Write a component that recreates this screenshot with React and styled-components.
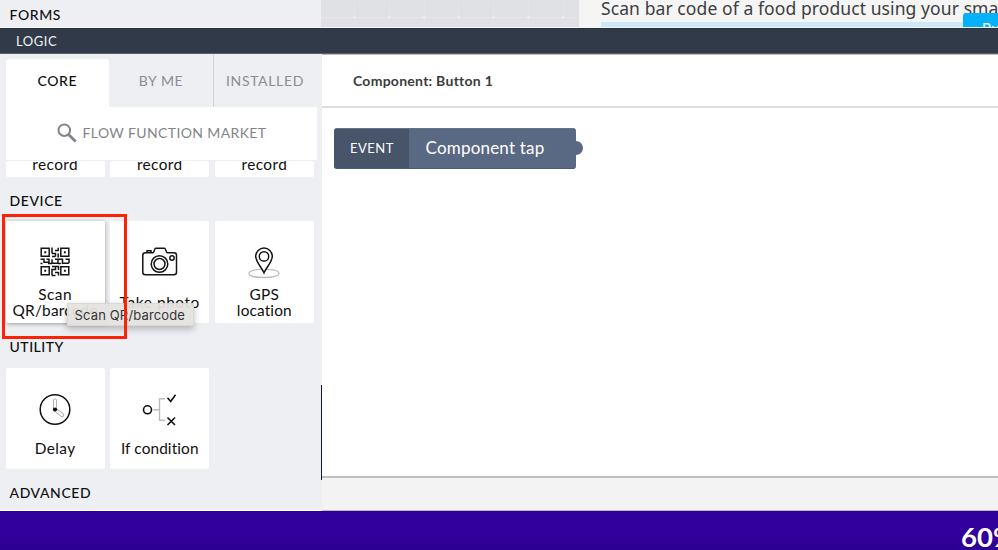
import React from "react";
import styled, { createGlobalStyle } from "styled-components";

const Global = createGlobalStyle`
  * { box-sizing: border-box; }
  body { margin: 0; overflow: hidden; background: #edeff3; }
`;

const Page = styled.div`
  width: 998px;
  height: 550px;
  overflow: hidden;
  display: flex;
  flex-direction: column;
  font-family: Lato, "Open Sans", sans-serif;
  color: #101010;
`;

/* A single line of text with tunable tracking */
const Text = styled.span`
  display: block;
  white-space: nowrap;
  font-size: ${(p) => p.$size || 15.4}px;
  line-height: ${(p) => p.$line || 16}px;
  font-weight: ${(p) => p.$weight || 400};
  letter-spacing: ${(p) => p.$track || 0}px;
  color: ${(p) => p.$color || "inherit"};
`;

const TopStrip = styled.div`
  height: 28px;
  flex: none;
  display: flex;
  overflow: hidden;
  border-bottom: 1px solid #f7f8fa;
`;
const TopSide = styled.div`
  width: 321px;
  padding: 7px 0 0 9.5px;
  background: #edeff3;
`;
const GridCanvas = styled.div`
  width: 258px;
  background:
    radial-gradient(circle at 50% 50%, #ebecee 0 1px, transparent 2px) 16px 0 / 34.8px 34px,
    repeating-linear-gradient(90deg, transparent 0 33px, #e3e4e7 33px 34px, transparent 34px 34.8px),
    linear-gradient(transparent 17px, #e5e6e9 17px 18px, transparent 18px),
    #e0e1e5;
`;
const Preview = styled.div`
  position: relative;
  flex: 1;
  padding-left: 22px;
  background: #f5f5f5;
  overflow: hidden;
  font-family: "Noto Sans", sans-serif;
`;
const Selection = styled.div`
  height: 6px;
  margin-top: 6px;
  background: #cde8f8;
`;
const BlueTag = styled.div`
  position: absolute;
  left: 384px;
  top: 13px;
  width: 60px;
  height: 24px;
  padding: 8px 0 0 19px;
  border-radius: 3px;
  background: #06b1fb;
  font-family: Lato, sans-serif;
`;

const LogicBar = styled.div`
  height: 26px;
  flex: none;
  padding: 4px 0 0 16px;
  background: #303a49;
  border-top: 1px solid #29323f;
  border-bottom: 1px solid #59616c;
`;

const Body = styled.div`
  height: 457px;
  flex: none;
  display: flex;
`;
const Sidebar = styled.aside`
  position: relative;
  width: 322px;
  padding: 5px 5px 0 5.5px;
  background: #edeff3;
  border-bottom: 1px solid #fff;
`;
const Tabs = styled.div`
  display: flex;
  height: 48px;
`;
const Tab = styled.div`
  width: ${(p) => p.$w}px;
  padding-top: 14px;
  display: flex;
  justify-content: center;
  background: ${(p) => (p.$active ? "#fff" : "transparent")};
  border-radius: 3px 3px 0 0;
`;
const TabRule = styled.div`
  width: 1px;
  height: 53px;
  margin-top: -5px;
  background: #cfd1d6;
`;
const Market = styled.div`
  display: flex;
  width: 311.5px;
  height: 54px;
  padding: 16px 0 0 51px;
  gap: 6px;
  background: #fff;
  border-bottom: 1px solid #eeeff2;
`;
const Cards = styled.div`
  display: flex;
  gap: 5.3px;
  height: ${(p) => p.$h}px;
`;
const Card = styled.div`
  width: 99.3px;
  height: 100%;
  display: flex;
  flex-direction: column;
  align-items: center;
  background: #fff;
  border-radius: 2px;
  overflow: hidden;
  box-shadow: ${(p) => (p.$hover ? "0 1px 4px rgba(0,0,0,.35)" : "none")};
`;
const IconBox = styled.div`
  width: 50px;
  height: ${(p) => p.$h || 65}px;
  flex: none;
  padding-top: 26px;
  display: flex;
  justify-content: center;
  svg { overflow: visible; display: block; flex: none; }
`;
const Heading = styled.div`
  height: ${(p) => p.$h}px;
  padding: ${(p) => p.$top}px 0 0 4px;
`;
const RedFrame = styled.div`
  position: absolute;
  left: 2px;
  top: 160px;
  width: 125px;
  height: 125px;
  border: 3px solid #fc2206;
`;
const Tooltip = styled.div`
  position: absolute;
  left: 67px;
  top: 249px;
  width: 127px;
  height: 23px;
  padding: 4px 0 0 6.5px;
  background: rgba(228, 227, 223, 0.95);
  border: 1px solid #d8d7d4;
  box-shadow: 0 3px 7px rgba(0, 0, 0, 0.25);
  font-family: Inter, sans-serif;
`;
const Scrollbar = styled.div`
  position: absolute;
  left: 321px;
  top: 331px;
  width: 1px;
  height: 95px;
  background: #101b27;
`;

const Editor = styled.main`
  flex: 1;
  display: flex;
  flex-direction: column;
  background: #fff;
  border-top: 1px solid #b9bbbf;
`;
const EditorHead = styled.div`
  height: 53px;
  padding: 18px 0 0 31px;
  border-bottom: 2px solid #dddee0;
`;
const Flow = styled.div`
  height: 368px;
  padding: 20px 0 0 12px;
`;
const EventBlock = styled.div`
  position: relative;
  display: flex;
  width: 242px;
  height: 41px;
  border-radius: 3px;
  background: #5a6983;
  border-top: 1px solid #657187;
  border-bottom: 1px solid #4f5d75;
  color: #fff;
`;
const EventKind = styled.div`
  width: 75px;
  padding: 11px 0 0 16px;
  background: #475469;
  border-radius: 2px 0 0 2px;
`;
const EventName = styled.div`
  padding: 8px 0 0 16.5px;
`;
const Connector = styled.div`
  position: absolute;
  right: -7px;
  top: 12px;
  width: 14px;
  height: 14px;
  border-radius: 50%;
  background: #5a6983;
`;
const EditorFoot = styled.div`
  flex: 1;
  background: #f3f3f3;
  border-top: 2px solid #bdbdbf;
  border-bottom: 1px solid #bcbcbe;
`;
const Footer = styled.footer`
  height: 39px;
  flex: none;
  padding: 12px 0 0 961px;
  background: linear-gradient(#250084 0, #31009d 1px, #31009d 60%, #2c0092);
`;

const SearchIcon = () => (
  <svg width="20" height="20" viewBox="0 0 20 20" fill="none" stroke="#81858b">
    <circle cx="7.3" cy="7.2" r="5.8" strokeWidth="2" />
    <path d="M11.5 11.4 18.7 18.4" strokeWidth="2.8" />
  </svg>
);

const QrIcon = () => (
  <svg width="30" height="30" viewBox="0 0 30 30" fill="none" stroke="#151515" strokeWidth="1.5">
    <path d="M1.200 1.200h8v8h-8zM20.800 1.200h8v8h-8zM1.200 19.800h8v8h-8zM20.800 19.800h8v8h-8z" />
    <path d="M4.300 5.200h1.900M23.900 5.200h1.900M4.300 23.800h1.900M23.900 23.800h1.900" strokeWidth="1.900" />
    <path d="M12 .5v6M12 6.500h3.500v3M15 3.500h3.200V.800M18.200 6.500v4M12 9.500h3.500M.5 12.300h3.500v3h5v-3H6.500M.5 16.500h2M12 12.300v4h6v-4h-3M12 16.500H8M18 12.300h4.500v4h6.300M25.500 12.300h3.500v4M21 16.500h-3M12 28.500v-6h3.500v-3M12 19.500h6.500v3.500M15 25.500h3.500v3M12 28.500h3.500" />
  </svg>
);

const CameraIcon = () => (
  <svg width="36" height="30" viewBox="0 0 36 30" fill="none" stroke="#151515" strokeWidth="1.5">
    <path d="M3.400 5.800h7.700c1.100 0 1.300-4.600 2.500-4.600h9c1.200 0 1.500 4.600 2.800 4.600h6.500q2.600 0 2.600 2.500v17q0 2.500-2.600 2.500H3.400Q.8 27.800.8 25.300V8.300q0-2.500 2.600-2.500z" />
    <path d="M5 5.500V3.800h4v1.700" />
    <circle cx="17.500" cy="17" r="8.300" />
    <circle cx="17.500" cy="17" r="5.500" />
    <circle cx="30" cy="11" r="2.200" />
  </svg>
);

const PinIcon = () => (
  <svg width="32" height="32" viewBox="0 0 32 32" fill="none">
    <path d="M13 22.400C6 22.700 1 24.300 1 26.400c0 2.400 6.500 4.100 15 4.100s15-1.700 15-4.100c0-2.100-5-3.700-12-4" stroke="#bbbcc1" strokeWidth="1.300" />
    <path d="M16 25.800C13.500 20 7.700 15 7.700 9.300a8.300 8.300 0 0 1 16.600 0C24.300 15 18.500 20 16 25.800z" stroke="#151515" strokeWidth="1.500" />
    <circle cx="16" cy="9.400" r="4.700" stroke="#151515" strokeWidth="1.500" />
  </svg>
);

const ClockIcon = () => (
  <svg width="32" height="32" viewBox="0 0 32 32" fill="none">
    <circle cx="16" cy="15.500" r="14.800" stroke="#101010" strokeWidth="1.500" />
    <rect x="14.500" y="5" width="3" height="10" rx="1" stroke="#aeb0b5" />
    <rect x="14.500" y="5" width="3" height="10" rx="1" stroke="#aeb0b5" transform="rotate(128 16 15.500)" />
    <circle cx="16" cy="15.500" r="2.100" fill="#101010" />
  </svg>
);

const ConditionIcon = () => (
  <svg width="36" height="34" viewBox="0 0 36 34" fill="none" stroke="#101010" strokeWidth="1.600">
    <circle cx="5.500" cy="15.800" r="4" />
    <path d="M11.500 15.800h6M23 4.800h-5.500v21.500H23" stroke="#bbbcc1" strokeWidth="1.400" />
    <path d="m25.500 3.800 3.200 3.700L33.500.800M25.500 23.500l7.500 7.500m0-7.500L25.500 31" />
  </svg>
);

export default function App() {
  return (
    <Page>
      <Global />
      <TopStrip>
        <TopSide><Text $size={14} $weight={500} $track={0.6}>FORMS</Text></TopSide>
        <GridCanvas />
        <Preview>
          <Text $size={17.5} $line={16} $track={0.09} $color="#3c3e42">Scan bar code of a food product using your sma</Text>
          <Selection />
          <BlueTag><Text $size={14.5} $color="#fff">Button</Text></BlueTag>
        </Preview>
      </TopStrip>
      <LogicBar><Text $size={13} $track={0.55} $color="#f2f3f5">LOGIC</Text></LogicBar>
      <Body>
        <Sidebar>
          <Tabs>
            <Tab $w={103.5} $active><Text $size={14} $weight={500} $track={0.6}>CORE</Text></Tab>
            <Tab $w={104}><Text $size={14} $track={0.6} $color="#8b8d92">BY ME</Text></Tab>
            <TabRule />
            <Tab $w={102}><Text $size={14} $track={0.65} $color="#8b8d92">INSTALLED</Text></Tab>
          </Tabs>
          <Market>
            <SearchIcon />
            <Text $size={14} $line={20} $track={0.38} $color="#81858b">FLOW FUNCTION MARKET</Text>
          </Market>
          <Cards $h={16}>
            {[0, 1, 2].map((i) => (
              <Card key={i}><Text $line={7} $track={0.4}>record</Text></Card>
            ))}
          </Cards>
          <Heading $h={44} $top={16}><Text $size={14} $weight={500} $track={0.6}>DEVICE</Text></Heading>
          <Cards $h={102}>
            <Card $hover>
              <IconBox><QrIcon /></IconBox>
              <Text $track={0.5}>Scan</Text>
              <Text $track={0.2}>QR/barcode</Text>
            </Card>
            <Card>
              <IconBox $h={73}><CameraIcon /></IconBox>
              <Text $track={0.6}>Take photo</Text>
            </Card>
            <Card>
              <IconBox><PinIcon /></IconBox>
              <Text $track={0.3}>GPS</Text>
              <Text $track={0.15}>location</Text>
            </Card>
          </Cards>
          <Heading $h={45} $top={16}><Text $size={14} $weight={500} $track={0.5}>UTILITY</Text></Heading>
          <Cards $h={101}>
            <Card>
              <IconBox $h={72}><ClockIcon /></IconBox>
              <Text $track={0.4}>Delay</Text>
            </Card>
            <Card>
              <IconBox $h={72}><ConditionIcon /></IconBox>
              <Text $track={0.1}>If condition</Text>
            </Card>
          </Cards>
          <Heading $h={40} $top={16}><Text $size={14} $weight={500} $track={0.6}>ADVANCED</Text></Heading>
          <Tooltip><Text $size={13} $line={15} $track={0.15} $color="#353535">Scan QR/barcode</Text></Tooltip>
          <RedFrame />
          <Scrollbar />
        </Sidebar>
        <Editor>
          <EditorHead><Text $size={14} $weight={700} $track={0.26} $color="#3c3c3c">Component: Button 1</Text></EditorHead>
          <Flow>
            <EventBlock>
              <EventKind><Text $size={13} $track={0.5}>EVENT</Text></EventKind>
              <EventName><Text $size={17} $line={22} $track={0.2}>Component tap</Text></EventName>
              <Connector />
            </EventBlock>
          </Flow>
          <EditorFoot />
        </Editor>
      </Body>
      <Footer><Text $size={27.5} $line={28} $weight={700} $color="#fff">60%</Text></Footer>
    </Page>
  );
}
